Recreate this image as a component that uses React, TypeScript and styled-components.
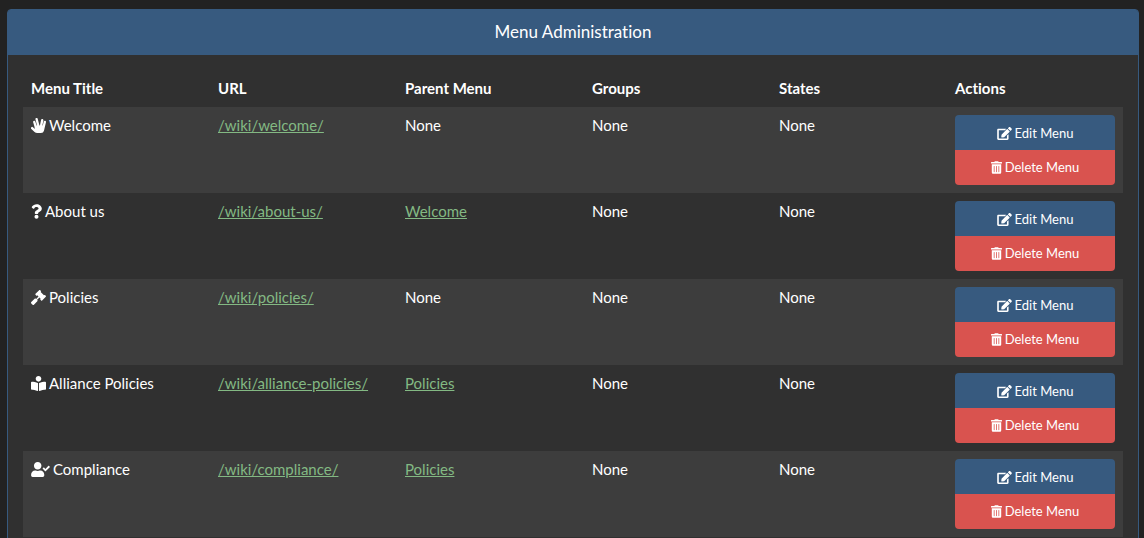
import React from "react";
import styled, { createGlobalStyle } from "styled-components";
import type { IconType } from "react-icons";
import {
  FaBookReader,
  FaEdit,
  FaGavel,
  FaHandSpock,
  FaQuestion,
  FaTrashAlt,
  FaUserCheck,
} from "react-icons/fa";

const GlobalStyle = createGlobalStyle`
  *, *::before, *::after { box-sizing: border-box; }
  body {
    margin: 0;
    background: #222222;
    color: #ffffff;
    font: 15px/21px Lato, "Helvetica Neue", Arial, sans-serif;
    font-variant-ligatures: none;
  }
`;

const Page = styled.main`
  padding: 9px 5px 20px 7px;
`;

const Panel = styled.section`
  background: #303030;
  border: 1px solid #375a7f;
  border-radius: 4px;
`;

const PanelHeading = styled.header`
  padding: 11px 15px 13px;
  background: #375a7f;
  border-radius: 2px 2px 0 0;
  text-align: center;
`;

const PanelTitle = styled.h1`
  margin: 0;
  font-size: 17px;
  font-weight: 400;
  line-height: 21px;
`;

const PanelBody = styled.div`
  padding: 15px;
`;

const Table = styled.table`
  width: 100%;
  table-layout: fixed;
  border-collapse: collapse;
`;

const HeadCell = styled.th<{ $width: string }>`
  width: ${({ $width }) => $width};
  padding: 8px;
  font-weight: 700;
  text-align: left;
`;

const Row = styled.tr`
  &:nth-child(odd) { background: #3d3d3d; }
`;

const Cell = styled.td`
  padding: 8px;
  vertical-align: top;
`;

const Link = styled.a`
  color: #83b983;
  text-decoration: underline;
`;

const Icon = styled.span<{ $width: number; $size?: number }>`
  margin-right: 3px;

  svg {
    display: inline-block;
    width: ${({ $width }) => $width}px;
    height: ${({ $size = 15 }) => $size}px;
    vertical-align: -2px;
  }
`;

const ButtonGroup = styled.div`
  display: flex;
  flex-direction: column;
  overflow: hidden;
  border-radius: 4px;
`;

const ActionButton = styled.button<{ $tone: "primary" | "danger" }>`
  height: 35px;
  padding: ${({ $tone }) => ($tone === "primary" ? "0 9px" : "0 9px 2px")};
  border: 0;
  background: ${({ $tone }) => ($tone === "primary" ? "#375a7f" : "#d9534f")};
  color: #ffffff;
  font-family: inherit;
  font-size: 13px;
  line-height: 20px;
  cursor: pointer;
`;

type MenuItem = { icon: IconType; iconWidth: number; title: string; url: string; parent?: string };

const columns = [
  { label: "Menu Title", width: "17%" },
  { label: "URL", width: "17%" },
  { label: "Parent Menu", width: "17%" },
  { label: "Groups", width: "17%" },
  { label: "States", width: "16%" },
  { label: "Actions", width: "16%" },
];

const items: MenuItem[] = [
  { icon: FaHandSpock, iconWidth: 15, title: "Welcome", url: "/wiki/welcome/" },
  { icon: FaQuestion, iconWidth: 11, title: "About us", url: "/wiki/about-us/", parent: "Welcome" },
  { icon: FaGavel, iconWidth: 15, title: "Policies", url: "/wiki/policies/" },
  { icon: FaBookReader, iconWidth: 15, title: "Alliance Policies", url: "/wiki/alliance-policies/", parent: "Policies" },
  { icon: FaUserCheck, iconWidth: 19, title: "Compliance", url: "/wiki/compliance/", parent: "Policies" },
];

function MenuRow({ icon: Glyph, iconWidth, title, url, parent }: MenuItem) {
  return (
    <Row>
      <Cell><Icon $width={iconWidth}><Glyph aria-hidden /></Icon>{title}</Cell>
      <Cell><Link href={url}>{url}</Link></Cell>
      <Cell>{parent ? <Link href={`/wiki/${parent.toLowerCase()}/`}>{parent}</Link> : "None"}</Cell>
      <Cell>None</Cell>
      <Cell>None</Cell>
      <Cell>
        <ButtonGroup>
          <ActionButton type="button" $tone="primary">
            <Icon $width={15} $size={13}><FaEdit aria-hidden /></Icon>Edit Menu
          </ActionButton>
          <ActionButton type="button" $tone="danger">
            <Icon $width={11} $size={13}><FaTrashAlt aria-hidden /></Icon>Delete Menu
          </ActionButton>
        </ButtonGroup>
      </Cell>
    </Row>
  );
}

export default function App() {
  return (
    <>
      <GlobalStyle />
      <Page>
        <Panel>
          <PanelHeading><PanelTitle>Menu Administration</PanelTitle></PanelHeading>
          <PanelBody>
            <Table>
              <thead>
                <tr>
                  {columns.map(({ label, width }) => (
                    <HeadCell key={label} $width={width} scope="col">{label}</HeadCell>
                  ))}
                </tr>
              </thead>
              <tbody>
                {items.map((item) => <MenuRow key={item.title} {...item} />)}
              </tbody>
            </Table>
          </PanelBody>
        </Panel>
      </Page>
    </>
  );
}
